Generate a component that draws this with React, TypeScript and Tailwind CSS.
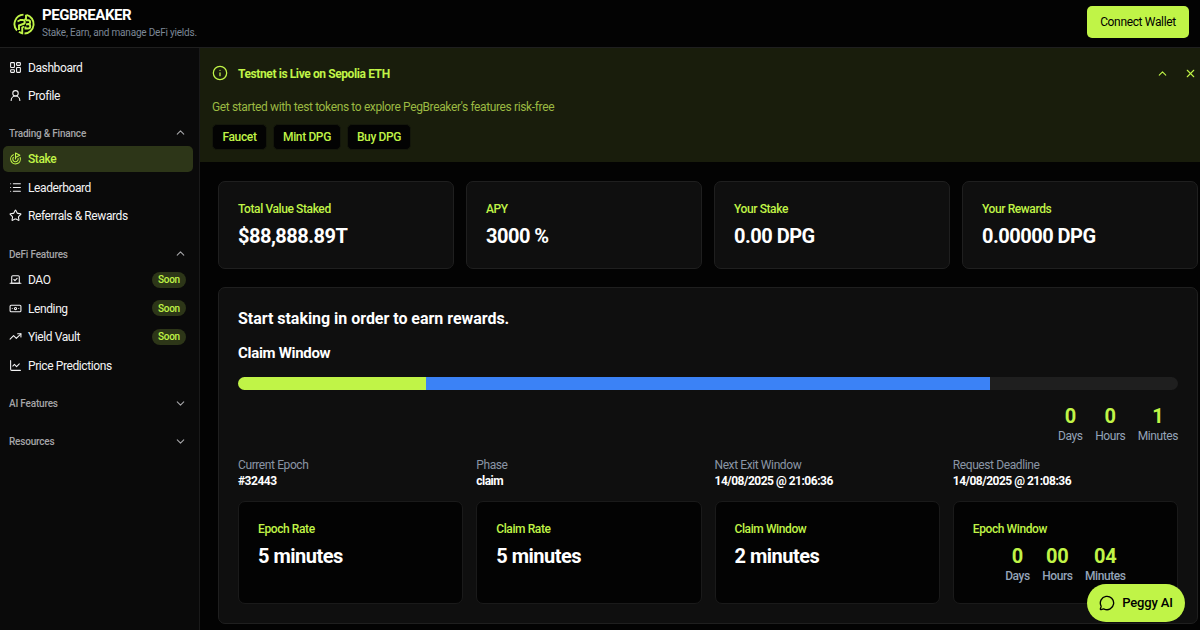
import React from "react";
import {
  Banknote,
  ChartLine,
  ChevronDown,
  ChevronUp,
  Goal,
  Info,
  LayoutDashboard,
  List,
  MessageCircle,
  Star,
  TrendingUp,
  UserRound,
  Vote,
  X,
  type LucideIcon,
} from "lucide-react";

type NavEntry = { icon: LucideIcon; label: string; active?: boolean; soon?: boolean };

function Logo() {
  return (
    <svg viewBox="0 0 44 44" className="size-[22px] shrink-0 text-[#c0f447]" fill="none" stroke="currentColor" strokeWidth="3.8">
      <path d="M21 3.2A19 19 0 0 0 8 35" />
      <path d="M27 3.6A19 19 0 0 1 23 41" />
      <path d="M12 37.500A19 19 0 0 0 18.500 40.700V29L22 27" />
      <path d="M9 17l6-3h4a4 4 0 0 1 1 8l-8 3V34" />
      <path d="M26 3.500V11L23 14M26 14.500h4.500a3.500 3.500 0 0 1 0 7.500L26 23M30 22a4 4 0 0 1 0 9H25V27" />
    </svg>
  );
}

function NavItem({ icon: Icon, label, active, soon }: NavEntry) {
  return (
    <div
      className={`flex h-[26px] items-center rounded-[5px] pl-[6px] pr-[7px] ${
        active ? "bg-[#2d3618] font-medium text-[#c0f447]" : "text-[#f4f4f5]"
      }`}
    >
      <Icon className="size-[13px] shrink-0" strokeWidth={2} />
      <span className="ml-[6px] flex-1 pt-px text-[12px] tracking-[-0.4px]">{label}</span>
      {soon && (
        <span className="flex h-4 w-[34px] items-center justify-center rounded-full bg-[#2d3618] text-[10px] font-medium tracking-[-0.3px] text-[#c0f447]">
          Soon
        </span>
      )}
    </div>
  );
}

function SectionTitle({ label, open }: { label: string; open?: boolean }) {
  const Chevron = open ? ChevronUp : ChevronDown;
  return (
    <div className="flex h-[26px] items-center justify-between pl-[6px] pr-[6px] text-[10px] font-medium tracking-[-0.2px] text-[#a5a5a8]">
      <span className={open ? "pt-px" : ""}>{label}</span>
      <Chevron className="size-[13px]" />
    </div>
  );
}

function Sidebar() {
  return (
    <aside className="flex w-[200px] shrink-0 flex-col border-r border-[#1a1a1a] bg-[#0a0a0a] pl-[3px] pr-[6px] pt-[6px]">
      <div className="flex flex-col gap-[2.6px]">
        <NavItem icon={LayoutDashboard} label="Dashboard" />
        <NavItem icon={UserRound} label="Profile" />
      </div>
      <div className="mt-[11px] flex flex-col">
        <SectionTitle label="Trading & Finance" open />
        <div className="flex flex-col gap-[2.6px]">
          <NavItem icon={Goal} label="Stake" active />
          <NavItem icon={List} label="Leaderboard" />
          <NavItem icon={Star} label="Referrals & Rewards" />
        </div>
      </div>
      <div className="mt-[12px] flex flex-col">
        <SectionTitle label="DeFi Features" open />
        <div className="flex flex-col gap-[2.6px]">
          <NavItem icon={Vote} label="DAO" soon />
          <NavItem icon={Banknote} label="Lending" soon />
          <NavItem icon={TrendingUp} label="Yield Vault" soon />
          <NavItem icon={ChartLine} label="Price Predictions" />
        </div>
      </div>
      <div className="mt-[12px] flex flex-col gap-[12px]">
        <SectionTitle label="AI Features" />
        <SectionTitle label="Resources" />
      </div>
    </aside>
  );
}

function Banner() {
  return (
    <section className="h-[114px] bg-[#191d0c] pl-[12px] pr-[3px] pt-[17px] text-[#c0f447]">
      <div className="flex h-4 items-center">
        <Info className="size-4" strokeWidth={1.9} />
        <h2 className="ml-[10px] flex-1 pt-px text-[12px] font-bold tracking-[-0.4px]">Testnet is Live on Sepolia ETH</h2>
        <ChevronUp className="size-[13px]" />
        <X className="ml-[15px] size-[13px]" />
      </div>
      <p className="mt-[17px] h-[18px] text-[12px] leading-[18px] tracking-[-0.37px] text-[#9bb942]">
        Get started with test tokens to explore PegBreaker's features risk-free
      </p>
      <div className="mt-[8px] flex gap-[6px] text-[12px] font-medium tracking-[-0.37px]">
        <button className="h-[26px] w-[55px] rounded-[5px] border border-[#14170b] bg-[#030303]">Faucet</button>
        <button className="h-[26px] w-[68px] rounded-[5px] border border-[#14170b] bg-[#030303]">Mint DPG</button>
        <button className="h-[26px] w-[64px] rounded-[5px] border border-[#14170b] bg-[#030303]">Buy DPG</button>
      </div>
    </section>
  );
}

function StatCard({ label, value }: { label: string; value: string }) {
  return (
    <div className="h-[88px] rounded-[7px] border border-[#1f1f1f] bg-[#0f0f0f] px-[19px] pt-[19px]">
      <div className="text-[12px] font-medium leading-4 tracking-[-0.4px] text-[#c0f447]">{label}</div>
      <div className="mt-[7px] text-[20px] font-bold leading-6 tracking-[-0.5px] text-white">{value}</div>
    </div>
  );
}

function Countdown({ values, className }: { values: string[]; className: string }) {
  const units = ["Days", "Hours", "Minutes"];
  return (
    <div className={`flex gap-[12.5px] ${className}`}>
      {units.map((unit, i) => (
        <div key={unit} className="text-center">
          <div className="text-[20px] font-bold leading-6 tracking-[-0.2px] text-[#c0f447]">{values[i]}</div>
          <div className="text-[12px] leading-4 tracking-[-0.42px] text-[#94a3b8]">{unit}</div>
        </div>
      ))}
    </div>
  );
}

function RateCard({ label, children }: { label: string; children: React.ReactNode }) {
  return (
    <div className="h-[103px] rounded-[7px] border border-[#1a1a1a] bg-[#030303] px-[19px] pt-[19px]">
      <div className="text-[12px] font-medium leading-4 tracking-[-0.4px] text-[#c0f447]">{label}</div>
      <div className="mt-[7px] text-[20px] font-bold leading-6 tracking-[-0.5px] text-white">{children}</div>
    </div>
  );
}

const epochInfo = [
  ["Current Epoch", "#32443"],
  ["Phase", "claim"],
  ["Next Exit Window", "14/08/2025 @ 21:06:36"],
  ["Request Deadline", "14/08/2025 @ 21:08:36"],
];

function StakingPanel() {
  return (
    <section className="mt-[18px] h-[337px] rounded-[7px] border border-[#1f1f1f] bg-[#0f0f0f] px-[19px] pt-[20px]">
      <h2 className="text-[16px] font-bold leading-[22px] tracking-[-0.03px] text-white">Start staking in order to earn rewards.</h2>
      <h3 className="mt-[12px] text-[15px] font-bold leading-[22px] tracking-[-0.3px] text-white">Claim Window</h3>
      <div className="mt-[13px] flex h-[13px] overflow-hidden rounded-full bg-[#1f1f1f]">
        <div className="w-[20%] bg-[#c0f447]" />
        <div className="w-[60%] bg-[#3b82f6]" />
      </div>
      <Countdown values={["0", "0", "1"]} className="mt-[14px] justify-end" />
      <div className="mt-[13px] grid grid-cols-4 gap-[13px] text-[12px] leading-4">
        {epochInfo.map(([label, value]) => (
          <div key={label}>
            <div className="tracking-[-0.4px] text-[#8a95a5]">{label}</div>
            <div className="font-bold tracking-[-0.5px] text-white">{value}</div>
          </div>
        ))}
      </div>
      <div className="mt-[12px] grid grid-cols-4 gap-[13px]">
        <RateCard label="Epoch Rate">5 minutes</RateCard>
        <RateCard label="Claim Rate">5 minutes</RateCard>
        <RateCard label="Claim Window">2 minutes</RateCard>
        <RateCard label="Epoch Window">
          <Countdown values={["0", "00", "04"]} className="justify-center font-medium" />
        </RateCard>
      </div>
    </section>
  );
}

export default function App() {
  return (
    <div className="relative flex h-[630px] w-[1200px] flex-col overflow-hidden bg-[#030303] font-[Roboto,sans-serif]">
      <header className="flex h-12 shrink-0 items-center border-b border-[#1f1f1f] bg-[#030303] pl-[13px] pr-[11px]">
        <Logo />
        <div className="ml-[7px] flex-1">
          <h1 className="text-[15px] font-bold leading-[16px] tracking-[-0.45px] text-white">PEGBREAKER</h1>
          <p className="mt-[3px] text-[10px] leading-[14px] tracking-[-0.2px] text-[#7c8796]">Stake, Earn, and manage DeFi yields.</p>
        </div>
        <button className="mb-[3px] h-8 w-[102px] rounded-[5px] bg-[#c0f447] text-[12px] tracking-[-0.35px] text-black">
          Connect Wallet
        </button>
      </header>
      <div className="flex min-h-0 flex-1">
        <Sidebar />
        <main className="min-w-0 flex-1">
          <Banner />
          <div className="pl-[18px] pr-[2px] pt-[19px]">
            <div className="grid grid-cols-4 gap-[12px]">
              <StatCard label="Total Value Staked" value="$88,888.89T" />
              <StatCard label="APY" value="3000 %" />
              <StatCard label="Your Stake" value="0.00 DPG" />
              <StatCard label="Your Rewards" value="0.00000 DPG" />
            </div>
            <StakingPanel />
          </div>
        </main>
      </div>
      <button className="absolute bottom-[8px] right-[15px] flex h-[38px] w-[98px] items-center justify-center gap-[7px] rounded-full bg-[#c0f447] text-[13px] font-medium tracking-[-0.15px] text-black">
        <MessageCircle className="size-4" />
        Peggy AI
      </button>
    </div>
  );
}
